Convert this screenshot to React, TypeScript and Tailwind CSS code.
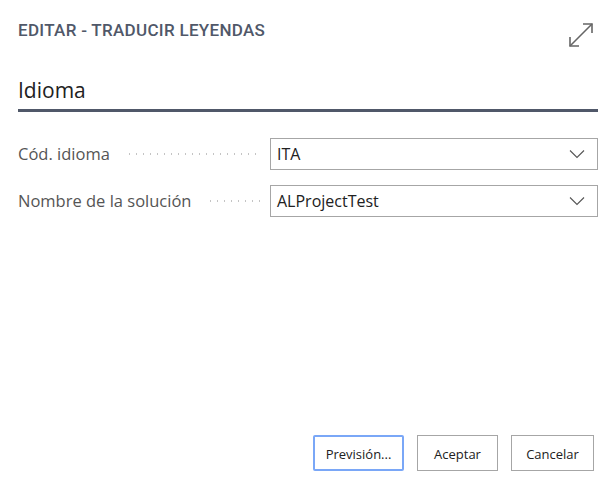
import React from 'react';

const font = { fontFamily: '"Open Sans", "Noto Sans", sans-serif' };

interface FieldProps {
  label: string;
  value: string;
}

const Chevron = () => (
  <svg width="16" height="10" viewBox="0 0 16 10" fill="none" className="text-[#555]">
    <path d="M1 1.5 L8 8.5 L15 1.5" stroke="currentColor" strokeWidth="1.1" />
  </svg>
);

const LookupField: React.FC<FieldProps> = ({ label, value }) => (
  <div className="flex items-center h-8">
    <span className="text-[16.5px] text-[#555] whitespace-nowrap pr-[16px]">{label}</span>
    <span className="flex-1 h-[2px] mr-[10px] bg-[radial-gradient(circle,#c4c4c4_0.8px,transparent_1px)] bg-[length:7px_2px] bg-repeat-x" />
    <div className="w-[328px] h-8 shrink-0 border border-[#a6a6a6] flex items-center justify-between pl-[6px] pr-[12px]">
      <span className="text-[16px] text-[#212121]">{value}</span>
      <Chevron />
    </div>
  </div>
);

const Button: React.FC<{ label: string; primary?: boolean; width: string }> = ({ label, primary, width }) => (
  <button
    className={`h-9 pt-[4px] ${width} text-[13px] text-[#212121] bg-white ${
      primary ? 'border-2 border-[#7aa7f7] rounded-[2px]' : 'border border-[#a6a6a6]'
    }`}
  >
    {label}
  </button>
);

export default function App() {
  return (
    <div className="w-[616px] h-[490px] bg-white relative flex flex-col" style={font}>
      <div className="flex items-start justify-between pl-[18px] pr-[22px] pt-[20px]">
        <h1
          className="text-[17px] text-[#505869] leading-5 tracking-[0.3px]"
          style={{ fontFamily: '"Roboto", "Liberation Sans", sans-serif', fontWeight: 500 }}
        >
          EDITAR - TRADUCIR LEYENDAS
        </h1>
        <svg width="26" height="26" viewBox="0 0 26 26" fill="none" className="mt-[2px] text-[#666]">
          <path d="M2 24 L24 2" stroke="currentColor" strokeWidth="1.6" />
          <path d="M15 2 H24 V11" stroke="currentColor" strokeWidth="1.6" />
          <path d="M2 15 V24 H11" stroke="currentColor" strokeWidth="1.6" />
        </svg>
      </div>

      <div className="mx-[18px] mt-[28px] border-b-[3px] border-[#505869] pb-[5px]">
        <h2 className="text-[21px] text-[#212121] leading-7 font-normal">Idioma</h2>
      </div>

      <div className="mx-[18px] mt-[26px] flex flex-col gap-[15px]">
        <LookupField label="Cód. idioma" value="ITA" />
        <LookupField label="Nombre de la solución" value="ALProjectTest" />
      </div>

      <div className="mt-auto mb-[19px] mr-[22px] flex justify-end gap-[13px]">
        <Button label="Previsión..." primary width="w-[91px]" />
        <Button label="Aceptar" width="w-[81px]" />
        <Button label="Cancelar" width="w-[83px]" />
      </div>
    </div>
  );
}
